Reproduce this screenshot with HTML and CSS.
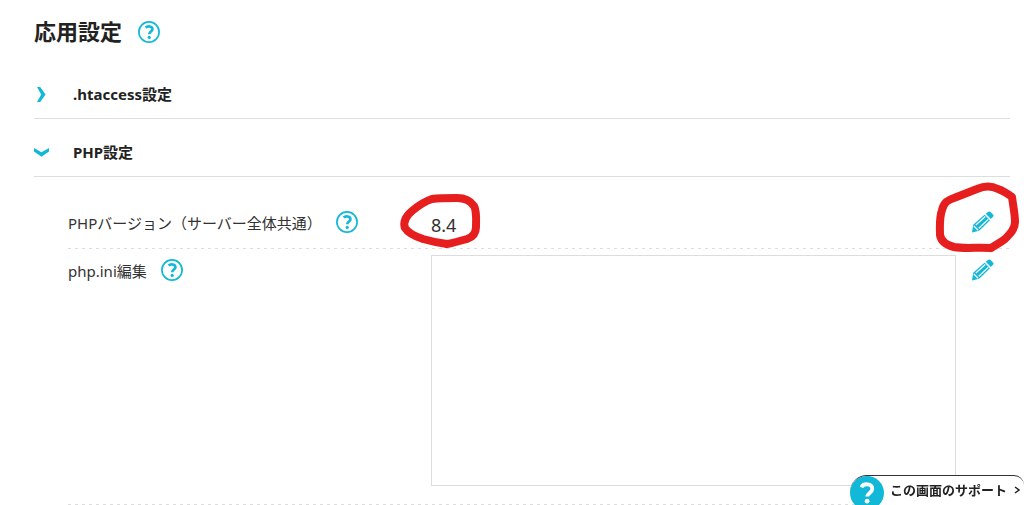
FILE: index.html
```html
<!DOCTYPE html>
<html lang="ja">
<head>
    <meta charset="UTF-8">
    <meta name="viewport" content="width=device-width, initial-scale=1.0">
    <title>応用設定</title>
    <link rel="stylesheet" href="styles.css">
</head>
<body>
    <svg class="sprite" aria-hidden="true">
        <symbol id="icon-help" viewBox="0 0 22 22">
            <circle cx="11" cy="11" r="10.1" fill="none" stroke="currentColor" stroke-width="1.7"/>
            <path d="M7.6 6.6C9.6 4.8 14.4 5 14.4 8.2C14.4 10.6 11.3 10.4 11.3 13.2" fill="none" stroke="currentColor" stroke-width="2.7"/>
            <circle cx="11.2" cy="16.4" r="1.6" fill="currentColor"/>
        </symbol>
        <symbol id="icon-pencil" viewBox="0 0 22 22">
            <path d="M13.8 2.8L16.4 .8Q17.6 0 18.6 1L21.2 3.7Q22 4.6 21.2 5.6L18.8 8Z" fill="currentColor"/>
            <path d="M1.2 13.8L12.5 3.7L18 9.2L7.2 19.8L0 21.6Z" fill="currentColor"/>
            <path d="M3.8 14L13.3 5.5M6.8 17.2L16.4 8.1M1.8 15L6.2 19.2" stroke="#fff" stroke-width="1.2" fill="none"/>
        </symbol>
    </svg>

    <main class="page">
        <header class="page-header">
            <h1>応用設定</h1>
            <button type="button" class="icon-btn" aria-label="ヘルプ"><svg><use href="#icon-help"/></svg></button>
        </header>

        <h2 class="section">
            <button type="button" class="section-toggle" aria-expanded="false">
                <svg class="chevron" viewBox="0 0 15 15"><path d="M3 0H6.2L11.6 7.5L6.2 15H3L7.2 7.5Z"/></svg>
                .htaccess設定
            </button>
        </h2>
        <h2 class="section">
            <button type="button" class="section-toggle" aria-expanded="true">
                <svg class="chevron" viewBox="0 0 15 15"><path d="M0 3L7.5 7.2L15 3V6.4L7.5 11.8L0 6.4Z"/></svg>
                PHP設定
            </button>
        </h2>

        <div class="panel">
            <div class="row">
                <div class="row-label">
                    <span>PHPバージョン（サーバー全体共通）</span>
                    <button type="button" class="icon-btn" aria-label="ヘルプ"><svg><use href="#icon-help"/></svg></button>
                </div>
                <div class="row-value">
                    8.4
                    <svg class="mark mark-value" viewBox="0 0 80 56"><path d="M46 51C38 50 29 48 22 46C13 43 7 40 4 35C2 29 5 23 11 18C18 12 25 8 31 6C38 5 48 5 56 5C63 5 69 7 73 13C76 18 75 29 75 34C75 40 72 44 66 46C59 48 52 50 46 51"/></svg>
                </div>
                <div class="row-action">
                    <button type="button" class="icon-btn" aria-label="PHPバージョンを編集"><svg><use href="#icon-pencil"/></svg></button>
                    <svg class="mark mark-action" viewBox="0 0 84 72"><path d="M55 65C42 64 29 66 18 64C10 62 5 58 4 52C4 44 3 36 6 27C8 19 12 17 18 15L41 6C48 3 56 3 62 6C68 8 72 11 76 14C77 22 79 31 79 39C79 46 74 51 69 56C65 59 60 62 55 65"/></svg>
                </div>
            </div>
            <div class="row">
                <div class="row-label">
                    <label for="phpIni">php.ini編集</label>
                    <button type="button" class="icon-btn" aria-label="ヘルプ"><svg><use href="#icon-help"/></svg></button>
                </div>
                <textarea id="phpIni" readonly></textarea>
                <div class="row-action">
                    <button type="button" class="icon-btn" aria-label="php.iniを編集"><svg><use href="#icon-pencil"/></svg></button>
                </div>
            </div>
        </div>
    </main>

    <a href="#" class="support">
        <svg class="support-icon" viewBox="0 0 34 34">
            <circle cx="17" cy="17" r="17" fill="#12b8d7"/>
            <path d="M11.5 11.4C13.2 6.8 22.3 7.2 22.3 12.8C22.3 16.8 17.2 17 17.2 20.6" fill="none" stroke="#fff" stroke-width="3.8"/>
            <circle cx="17.1" cy="25.2" r="2.4" fill="#fff"/>
        </svg>
        <span class="support-text">
            この画面のサポート
            <svg class="support-arrow" viewBox="0 0 6 8"><path d="M1 1L5 4L1 7"/></svg>
        </span>
    </a>
</body>
</html>
```
FILE: styles.css
```css
* {
    box-sizing: border-box;
}
body {
    margin: 0;
    background: #fff;
    color: #222;
    font-family: "Noto Sans", "Noto Sans CJK JP", sans-serif;
    font-size: 15px;
    line-height: 22px;
}
button {
    padding: 0;
    border: 0;
    background: none;
    color: inherit;
    font: inherit;
    cursor: pointer;
}
h1, h2 {
    margin: 0;
}
.sprite {
    position: absolute;
    width: 0;
    height: 0;
}
.page {
    padding: 16px 14px 0 34px;
}
.page-header {
    display: flex;
    align-items: center;
    gap: 16px;
    height: 32px;
    margin-bottom: 12px;
}
h1 {
    padding-bottom: 2px;
    font-size: 22px;
    line-height: 30px;
}
.icon-btn {
    display: block;
    width: 22px;
    height: 22px;
    color: #12b8d7;
}
.icon-btn svg {
    display: block;
    width: 22px;
    height: 22px;
}
.section {
    border-bottom: 1px solid #ddd;
    font-size: 15px;
}
.section-toggle {
    display: flex;
    align-items: center;
    gap: 24px;
    width: 100%;
    padding: 22px 0 13px;
    line-height: 22px;
    text-align: left;
}
.page-header + .section {
    padding-top: 1px;
}
.chevron {
    width: 15px;
    height: 15px;
    fill: #12b8d7;
}
.panel {
    padding: 24px 0 0 34px;
}
.row {
    display: grid;
    grid-template-columns: 363px 1fr 54px;
    min-height: 48px;
    padding: 6px 0;
    background: repeating-linear-gradient(90deg, #ddd 0 3px, transparent 3px 7px) bottom / 100% 1px no-repeat;
}
.row-label {
    display: flex;
    align-items: center;
    gap: 14px;
    height: 30px;
    color: #333;
}
.row-label span,
.row-label label {
    padding-top: 2px;
}
.row-label .icon-btn {
    flex: none;
}
.row-value {
    position: relative;
    padding-top: 4px;
    color: #333;
    font-size: 18px;
    line-height: 28px;
}
.row-action {
    position: relative;
    padding: 4px 0 0 16px;
}
textarea {
    display: block;
    width: 100%;
    height: 231px;
    margin-bottom: 13px;
    padding: 8px;
    border: 1px solid #ddd;
    background: #fff;
    resize: none;
}
/* hand-drawn highlights */
.mark {
    position: absolute;
    fill: none;
    stroke: #e61e1e;
    stroke-width: 8;
    stroke-linecap: round;
    stroke-linejoin: round;
    overflow: visible;
    pointer-events: none;
}
.mark-value {
    top: -14px;
    left: -30px;
    width: 80px;
    height: 56px;
}
.mark-action {
    top: -24px;
    left: -20px;
    width: 84px;
    height: 72px;
}
.support {
    position: fixed;
    right: 0;
    bottom: -5px;
    display: flex;
    gap: 6px;
    height: 35px;
    padding-right: 4px;
    border-top: 1px solid #333;
    border-radius: 17px 10px 10px 17px;
    background: #fff;
    color: #222;
    font-size: 13px;
    font-weight: bold;
    text-decoration: none;
}
.support-icon {
    width: 34px;
    height: 34px;
}
.support-text {
    display: flex;
    align-items: center;
    gap: 7px;
    height: 28px;
}
.support-arrow {
    width: 6px;
    height: 8px;
    fill: none;
    stroke: #222;
    stroke-width: 1.5;
}
```
